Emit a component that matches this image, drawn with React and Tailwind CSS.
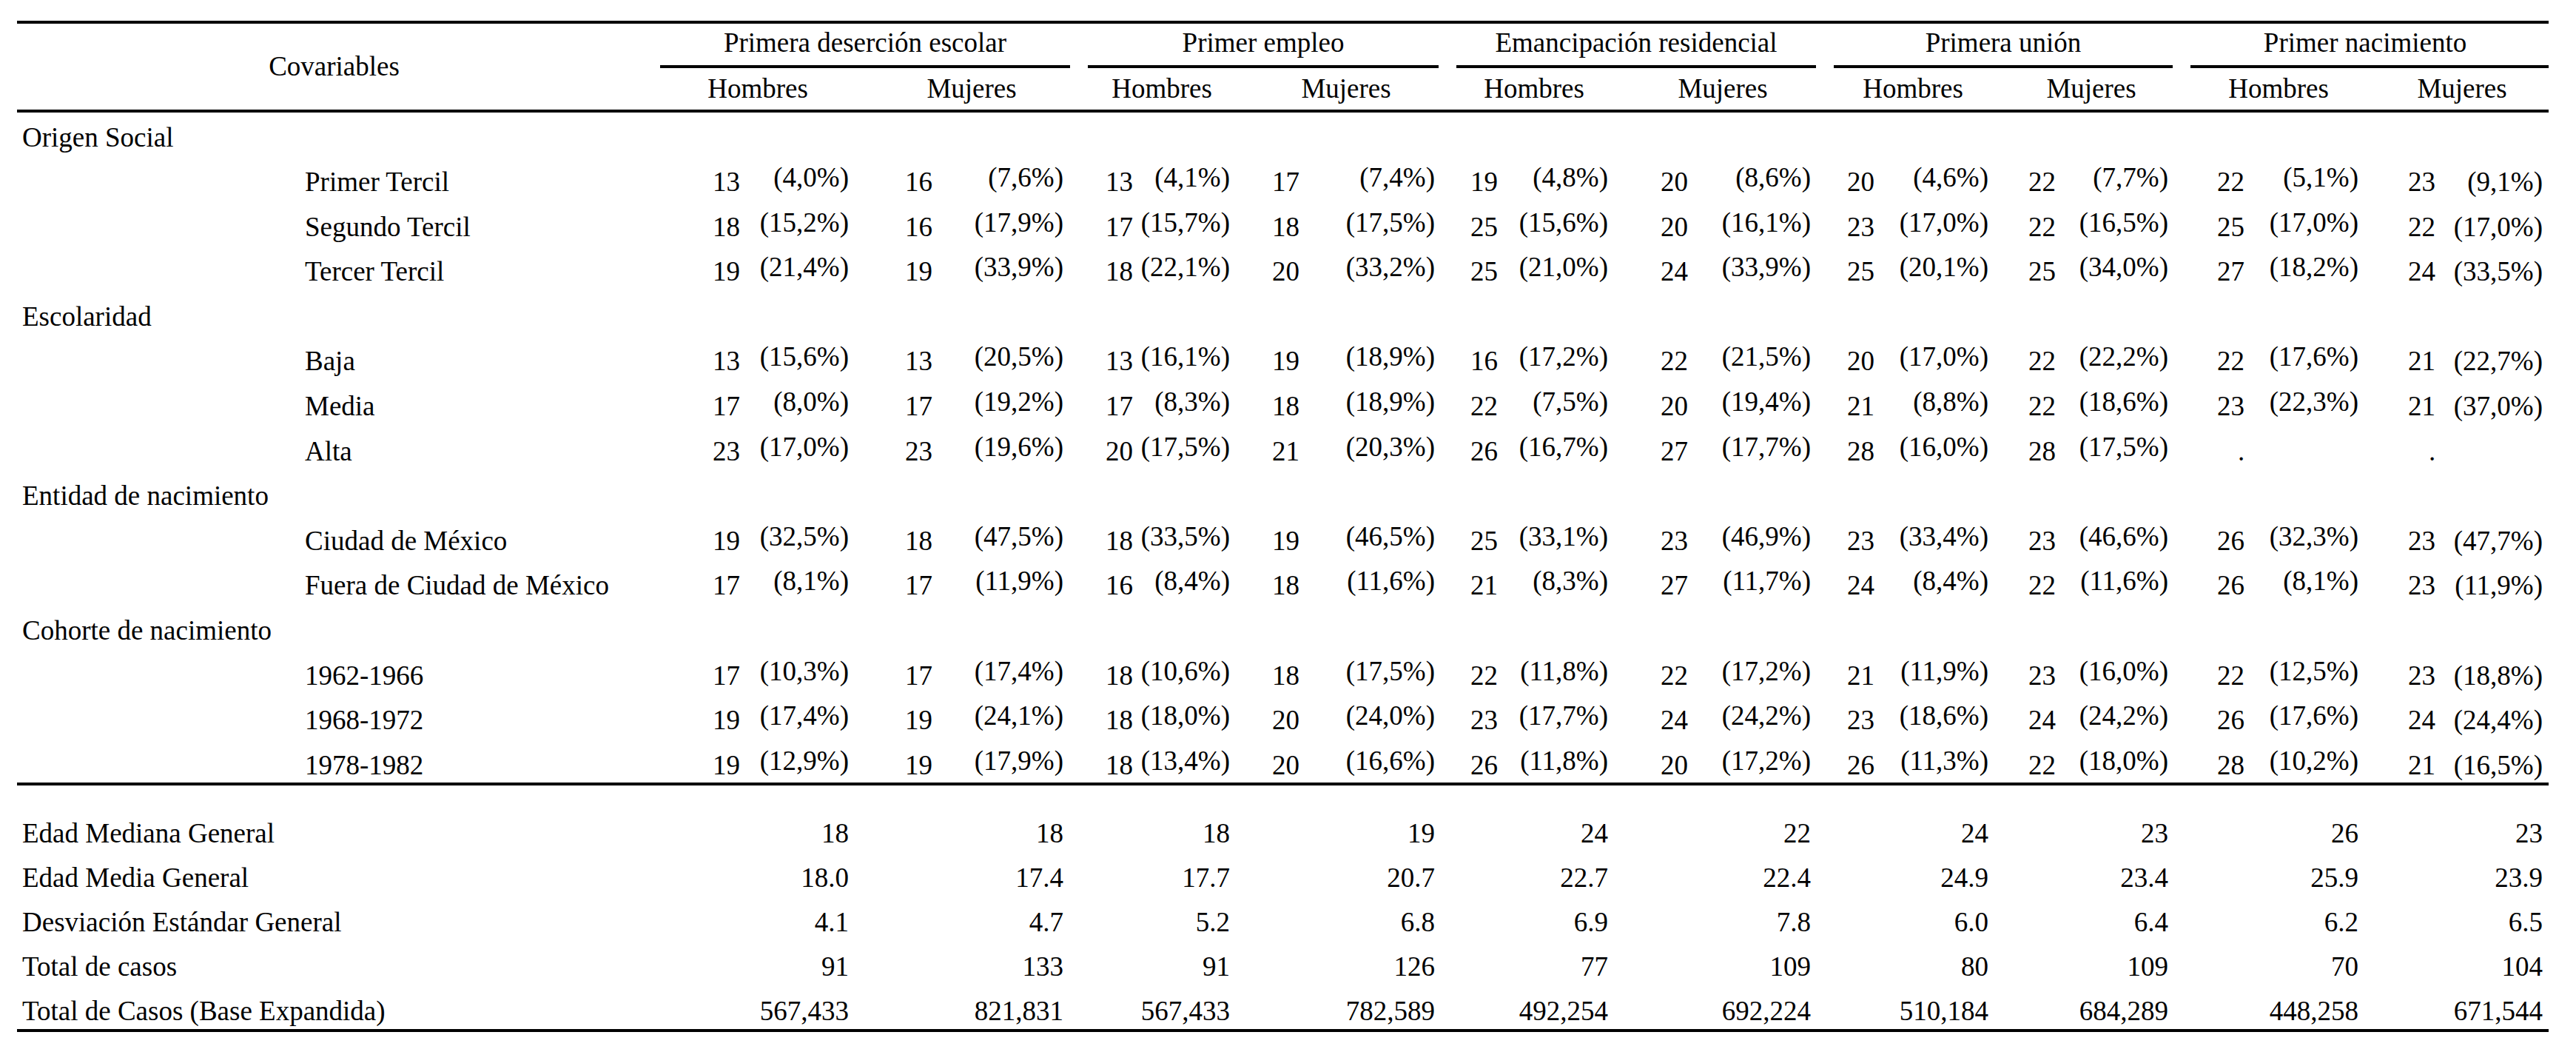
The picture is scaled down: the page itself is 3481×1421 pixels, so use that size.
import React from "react";

// column template shared by the header and every row
const cols =
  "grid grid-cols-[857px_288px_290px_224px_274px_234px_276px_238px_244px_262px_234px]";

// padding of each sub column (Hombres / Mujeres) so numbers and percents land where the table has them
const pads = [
  "pl-[83px] pr-[21px]",
  "pl-[55px] pr-[21px]",
  "pl-[36px] pr-[20px]",
  "pl-[37px] pr-[17px]",
  "pl-[31px] pr-[17px]",
  "pl-[54px] pr-[19px]",
  "pl-[30px] pr-[17px]",
  "pl-[37px] pr-[18px]",
  "pl-[48px] pr-[23px]",
  "pl-[44px] pr-[8px]",
];

const groups = [
  { title: "Primera deserción escolar", line: "mx-[12px]" },
  { title: "Primer empleo", line: "mx-[12px]" },
  { title: "Emancipación residencial", line: "mx-[12px]" },
  { title: "Primera unión", line: "mx-[12px]" },
  { title: "Primer nacimiento", line: "ml-[12px]" },
];

const rows = [
  { cat: "Origen Social" },
  {
    label: "Primer Tercil",
    v: ["13 (4,0%)", "16 (7,6%)", "13 (4,1%)", "17 (7,4%)", "19 (4,8%)", "20 (8,6%)", "20 (4,6%)", "22 (7,7%)", "22 (5,1%)", "23 (9,1%)"],
  },
  {
    label: "Segundo Tercil",
    v: ["18 (15,2%)", "16 (17,9%)", "17 (15,7%)", "18 (17,5%)", "25 (15,6%)", "20 (16,1%)", "23 (17,0%)", "22 (16,5%)", "25 (17,0%)", "22 (17,0%)"],
  },
  {
    label: "Tercer Tercil",
    v: ["19 (21,4%)", "19 (33,9%)", "18 (22,1%)", "20 (33,2%)", "25 (21,0%)", "24 (33,9%)", "25 (20,1%)", "25 (34,0%)", "27 (18,2%)", "24 (33,5%)"],
  },
  { cat: "Escolaridad" },
  {
    label: "Baja",
    v: ["13 (15,6%)", "13 (20,5%)", "13 (16,1%)", "19 (18,9%)", "16 (17,2%)", "22 (21,5%)", "20 (17,0%)", "22 (22,2%)", "22 (17,6%)", "21 (22,7%)"],
  },
  {
    label: "Media",
    v: ["17 (8,0%)", "17 (19,2%)", "17 (8,3%)", "18 (18,9%)", "22 (7,5%)", "20 (19,4%)", "21 (8,8%)", "22 (18,6%)", "23 (22,3%)", "21 (37,0%)"],
  },
  {
    label: "Alta",
    v: ["23 (17,0%)", "23 (19,6%)", "20 (17,5%)", "21 (20,3%)", "26 (16,7%)", "27 (17,7%)", "28 (16,0%)", "28 (17,5%)", ".", "."],
  },
  { cat: "Entidad de nacimiento" },
  {
    label: "Ciudad de México",
    v: ["19 (32,5%)", "18 (47,5%)", "18 (33,5%)", "19 (46,5%)", "25 (33,1%)", "23 (46,9%)", "23 (33,4%)", "23 (46,6%)", "26 (32,3%)", "23 (47,7%)"],
  },
  {
    label: "Fuera de Ciudad de México",
    v: ["17 (8,1%)", "17 (11,9%)", "16 (8,4%)", "18 (11,6%)", "21 (8,3%)", "27 (11,7%)", "24 (8,4%)", "22 (11,6%)", "26 (8,1%)", "23 (11,9%)"],
  },
  { cat: "Cohorte de nacimiento" },
  {
    label: "1962-1966",
    v: ["17 (10,3%)", "17 (17,4%)", "18 (10,6%)", "18 (17,5%)", "22 (11,8%)", "22 (17,2%)", "21 (11,9%)", "23 (16,0%)", "22 (12,5%)", "23 (18,8%)"],
  },
  {
    label: "1968-1972",
    v: ["19 (17,4%)", "19 (24,1%)", "18 (18,0%)", "20 (24,0%)", "23 (17,7%)", "24 (24,2%)", "23 (18,6%)", "24 (24,2%)", "26 (17,6%)", "24 (24,4%)"],
  },
  {
    label: "1978-1982",
    v: ["19 (12,9%)", "19 (17,9%)", "18 (13,4%)", "20 (16,6%)", "26 (11,8%)", "20 (17,2%)", "26 (11,3%)", "22 (18,0%)", "28 (10,2%)", "21 (16,5%)"],
  },
];

const summary = [
  { label: "Edad Mediana General", v: ["18", "18", "18", "19", "24", "22", "24", "23", "26", "23"] },
  { label: "Edad Media General", v: ["18.0", "17.4", "17.7", "20.7", "22.7", "22.4", "24.9", "23.4", "25.9", "23.9"] },
  { label: "Desviación Estándar General", v: ["4.1", "4.7", "5.2", "6.8", "6.9", "7.8", "6.0", "6.4", "6.2", "6.5"] },
  { label: "Total de casos", v: ["91", "133", "91", "126", "77", "109", "80", "109", "70", "104"] },
  { label: "Total de Casos (Base Expandida)", v: ["567,433", "821,831", "567,433", "782,589", "492,254", "692,224", "510,184", "684,289", "448,258", "671,544"] },
];

function Cell({ value, i }) {
  if (value === ".") {
    return (
      <div className={`flex ${pads[i]}`}>
        <span className="ml-[28px]">.</span>
      </div>
    );
  }
  const [n, p] = value.split(" ");
  // the last column keeps the percent on the baseline, the others sit a little higher
  const raise = i === 9 ? "" : "-translate-y-[6px]";
  return (
    <div className={`flex justify-between ${pads[i]}`}>
      <span>{n}</span>
      <span className={raise}>{p}</span>
    </div>
  );
}

export default function App() {
  return (
    <div className="min-h-screen bg-white pt-[28px] pl-[23px] font-['Liberation_Serif','Times_New_Roman',serif] text-[37px] text-black">
      <div className="w-[3421px]">
        <div className="h-[4px] bg-black" />

        <div className={cols}>
          <div className="row-span-2 flex items-center justify-center leading-[40px]">
            Covariables
          </div>
          {groups.map((g) => (
            <div key={g.title} className="col-span-2 pt-[6px]">
              <div className="text-center leading-[40px] whitespace-nowrap">{g.title}</div>
              <div className={`mt-[10px] h-[4px] bg-black ${g.line}`} />
            </div>
          ))}
          {groups.map((g) => (
            <React.Fragment key={g.title + "-sub"}>
              <div className="py-[8px] text-center leading-[40px]">Hombres</div>
              <div className="py-[8px] text-center leading-[40px]">Mujeres</div>
            </React.Fragment>
          ))}
        </div>

        <div className="h-[4px] bg-black" />

        <div className="flex flex-col gap-[20.6px] pt-[13.5px] pb-[3.5px] leading-[40px]">
          {rows.map((r, idx) =>
            r.cat ? (
              <div key={idx} className={`${cols} h-[40px]`}>
                <div className="pl-[7px] whitespace-nowrap">{r.cat}</div>
              </div>
            ) : (
              <div key={idx} className={`${cols} h-[40px] whitespace-nowrap`}>
                <div className="pl-[389px]">{r.label}</div>
                {r.v.map((v, i) => (
                  <Cell key={i} value={v} i={i} />
                ))}
              </div>
            )
          )}
        </div>

        <div className="h-[4px] bg-black" />

        <div className="flex flex-col gap-[20px] pt-[44.5px] pb-[4.5px] leading-[40px]">
          {summary.map((r) => (
            <div key={r.label} className={`${cols} h-[40px] whitespace-nowrap`}>
              <div className="pl-[7px]">{r.label}</div>
              {r.v.map((v, i) => (
                <div key={i} className={`text-right ${pads[i]}`}>
                  {v}
                </div>
              ))}
            </div>
          ))}
        </div>

        <div className="h-[4px] bg-black" />
      </div>
    </div>
  );
}
